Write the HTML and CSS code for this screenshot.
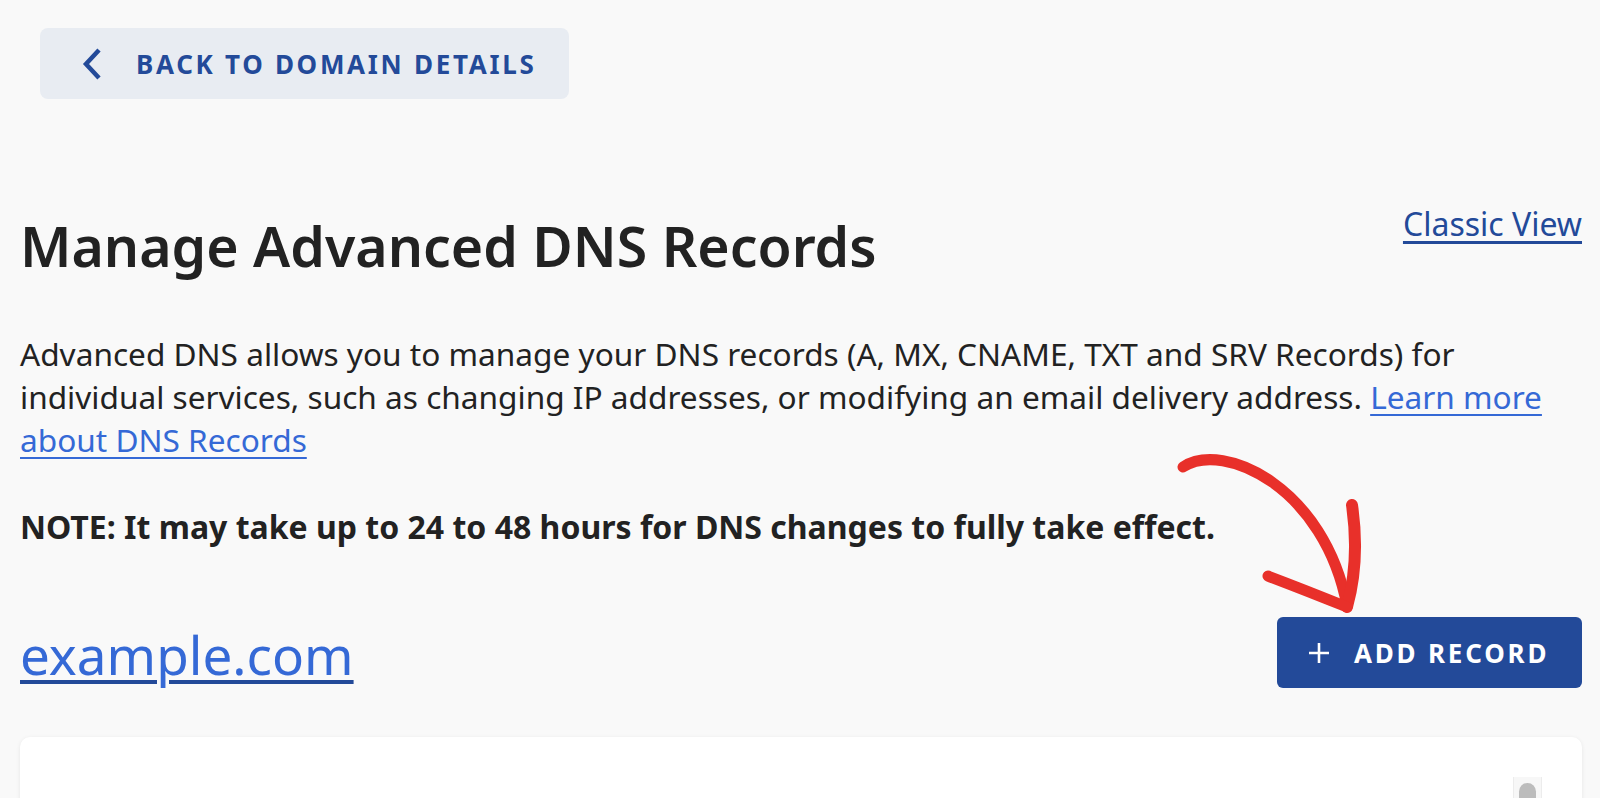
FILE: index.html
```html
<!DOCTYPE html>
<html lang="en">
<head>
<meta charset="utf-8">
<title>Manage Advanced DNS Records</title>
<link rel="stylesheet" href="styles.css">
</head>
<body>
<div class="page">
  <a class="back-btn" href="#">
    <svg class="back-icon" width="20" height="32" viewBox="0 0 20 32" aria-hidden="true"><path d="M17 2 L4 16 L17 30" fill="none" stroke="#234a99" stroke-width="4.5"/></svg>
    <span>BACK TO DOMAIN DETAILS</span>
  </a>

  <div class="title-row">
    <h1 class="title">Manage Advanced DNS Records</h1>
    <a class="classic" href="#">Classic View</a>
  </div>

  <p class="intro">Advanced DNS allows you to manage your DNS records (A, MX, CNAME, TXT and SRV Records) for individual services, such as changing IP addresses, or modifying an email delivery address. <a class="learn" href="#">Learn more about DNS Records</a></p>

  <p class="note">NOTE: It may take up to 24 to 48 hours for DNS changes to fully take effect.</p>

  <div class="domain-row">
    <a class="domain" href="#">example.com</a>
    <button class="add-btn" type="button">
      <svg width="22" height="22" viewBox="0 0 22 22" aria-hidden="true"><path d="M11 1 V21 M1 11 H21" stroke="#fff" stroke-width="2.6" fill="none"/></svg>
      <span>ADD RECORD</span>
    </button>
  </div>

  <div class="card">
    <div class="track"><div class="thumb"></div></div>
  </div>
</div>

<svg class="arrow" width="1600" height="798" viewBox="0 0 1600 798" aria-hidden="true">
  <g fill="none" stroke="#e8302a" stroke-linecap="round" stroke-linejoin="round">
    <path d="M1183 467 C1224 440 1325 488 1347 606" stroke-width="11"/>
    <path d="M1352 505 Q1360 560 1347 607" stroke-width="12"/>
    <path d="M1268 576 Q1305 590 1347 607" stroke-width="11"/>
  </g>
</svg>
</body>
</html>
```

FILE: styles.css
```css
html, body {
  margin: 0;
  padding: 0;
  background: #f9f9f9;
  overflow: hidden;
}

body {
  font-family: "Noto Sans", "Open Sans", sans-serif;
  color: #222;
  position: relative;
  height: 798px;
}

.page {
  padding: 28px 18px 0 20px;
}

.back-btn {
  display: flex;
  align-items: center;
  width: 529px;
  height: 71px;
  box-sizing: border-box;
  margin-left: 20px;
  padding-left: 42px;
  gap: 34px;
  background: #e8ecf2;
  border-radius: 8px;
  text-decoration: none;
  color: #234a99;
  font-weight: 700;
  font-size: 26px;
  letter-spacing: 2.7px;
}

.back-icon {
  display: block;
  flex: none;
}

.title-row {
  display: flex;
  justify-content: space-between;
  align-items: flex-start;
  margin-top: 104px;
}

.title {
  margin: 5px 0 0 0;
  font-size: 55.4px;
  line-height: 76px;
  font-weight: 600;
  color: #222;
}

.classic {
  font-size: 32px;
  line-height: 41px;
  color: #234a99;
  text-decoration: underline;
  text-decoration-thickness: 3px;
  text-underline-offset: 5px;
}

.intro {
  margin: 48px 0 0 0;
  font-size: 31.6px;
  line-height: 43px;
}

.learn {
  color: #3569d6;
  text-decoration: underline;
  text-decoration-thickness: 2px;
  text-underline-offset: 5px;
}

.note {
  margin: 44px 0 0 0;
  font-size: 32px;
  line-height: 43px;
  font-weight: 700;
}

.domain-row {
  display: flex;
  justify-content: space-between;
  align-items: flex-start;
  margin-top: 69px;
}

.domain {
  font-size: 53px;
  line-height: 76px;
  color: #3569d6;
  text-decoration: underline;
  text-decoration-color: #234a99;
  text-decoration-thickness: 4px;
  text-underline-offset: 5px;
}

.add-btn {
  display: flex;
  align-items: center;
  gap: 24px;
  width: 305px;
  height: 71px;
  margin-top: 0;
  padding: 0 0 0 31px;
  box-sizing: border-box;
  background: #234a99;
  border: none;
  border-radius: 6px;
  color: #fff;
  font-family: "Noto Sans", "Open Sans", sans-serif;
  font-weight: 700;
  font-size: 26px;
  letter-spacing: 2.8px;
}

.add-btn svg {
  display: block;
  flex: none;
}

.card {
  margin-top: 44px;
  height: 200px;
  background: #fff;
  border-radius: 10px;
  box-shadow: 0 1px 4px rgba(0, 0, 0, 0.08);
  display: flex;
  justify-content: flex-end;
  padding: 40px 40px 0 0;
  box-sizing: border-box;
}

.track {
  width: 29px;
  height: 160px;
  background: #f7f7f7;
  border-left: 1px solid #ececec;
  border-right: 1px solid #ececec;
  box-sizing: border-box;
  display: flex;
  justify-content: center;
  padding-top: 6px;
}

.thumb {
  width: 17px;
  height: 120px;
  background: #bcbcbc;
  border-radius: 9px;
}

.arrow {
  position: absolute;
  left: 0;
  top: 0;
  pointer-events: none;
}
```
